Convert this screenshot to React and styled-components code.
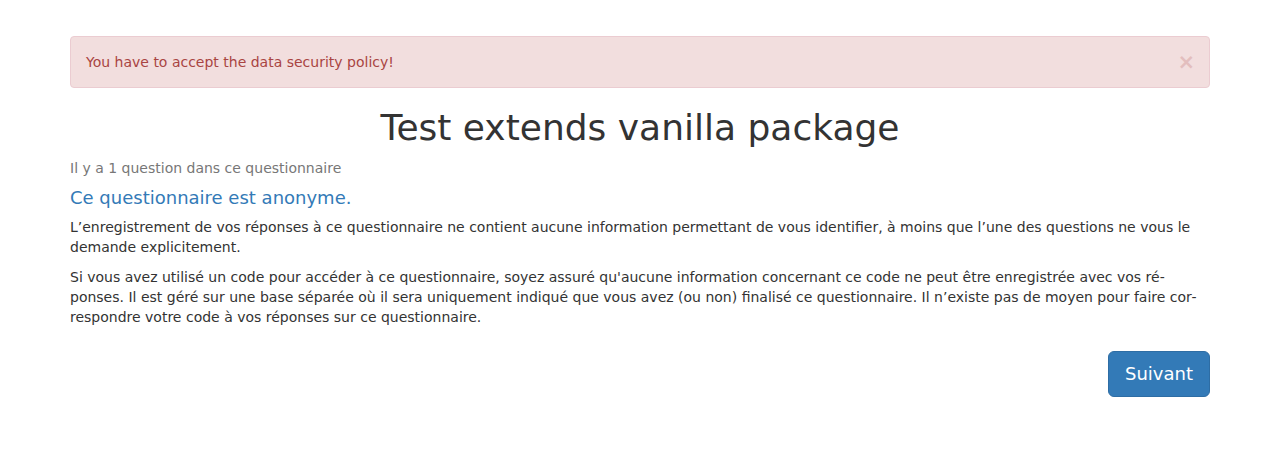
import React from 'react';
import styled, { createGlobalStyle } from 'styled-components';

const GlobalStyle = createGlobalStyle`
    body {
        margin: 0;
        background: #fff;
        font-family: "DejaVu Sans", Verdana, sans-serif;
        font-size: 14px;
        line-height: 20px;
        color: #333;
    }
`;

const Container = styled.div`
    margin: 0 72px 0 70px;
    padding-top: 36px;
`;

const Alert = styled.div`
    display: flex;
    justify-content: space-between;
    align-items: center;
    margin-bottom: 20px;
    padding: 15px 2px 15px 15px;
    background-color: #f2dede;
    border: 1px solid #ebccd1;
    border-radius: 4px;
    color: #a94442;
    font-size: 14px;
    line-height: 20px;
`;

const Close = styled.button`
    background: none;
    border: none;
    padding: 0 12px 0 0;
    font-family: "DejaVu Sans", sans-serif;
    font-size: 21px;
    font-weight: bold;
    line-height: 20px;
    color: #a94442;
    opacity: 0.2;
    cursor: pointer;
`;

const Title = styled.h1`
    margin: 20px 0 10px;
    text-align: center;
    font-size: 36px;
    font-weight: 500;
    line-height: 39.6px;
    color: #333;
`;

const Count = styled.div`
    color: #777;
    font-size: 14px;
    line-height: 20px;
`;

const Anon = styled.h4`
    margin: 10px 0;
    color: #337ab7;
    font-size: 18px;
    font-weight: 500;
    line-height: 19.8px;
`;

const Text = styled.p`
    margin: 0 0 10px;
    font-size: 14px;
    line-height: 20px;
`;

const Nav = styled.div`
    display: flex;
    justify-content: flex-end;
    margin-top: 24px;
`;

const Button = styled.button`
    padding: 10px 16px;
    font-family: "DejaVu Sans", sans-serif;
    font-size: 18px;
    line-height: 24px;
    color: #fff;
    background-color: #337ab7;
    border: 1px solid #2e6da4;
    border-radius: 6px;
    cursor: pointer;
`;

export default function App() {
    return (
        <>
            <GlobalStyle />
            <Container>
                <Alert>
                    <span>You have to accept the data security policy!</span>
                    <Close>×</Close>
                </Alert>
                <Title>Test extends vanilla package</Title>
                <Count>Il y a 1 question dans ce questionnaire</Count>
                <Anon>Ce questionnaire est anonyme.</Anon>
                <Text>
                    L’enregistrement de vos réponses à ce questionnaire ne contient aucune information permettant de vous identifier, à moins que l’une des questions ne vous le demande explicitement.
                </Text>
                <Text>
                    Si vous avez utilisé un code pour accéder à ce questionnaire, soyez assuré qu'aucune information concernant ce code ne peut être enregistrée avec vos ré{'\u00AD'}ponses. Il est géré sur une base séparée où il sera uniquement indiqué que vous avez (ou non) finalisé ce questionnaire. Il n’existe pas de moyen pour faire cor{'\u00AD'}respondre votre code à vos réponses sur ce questionnaire.
                </Text>
                <Nav>
                    <Button>Suivant</Button>
                </Nav>
            </Container>
        </>
    );
}
